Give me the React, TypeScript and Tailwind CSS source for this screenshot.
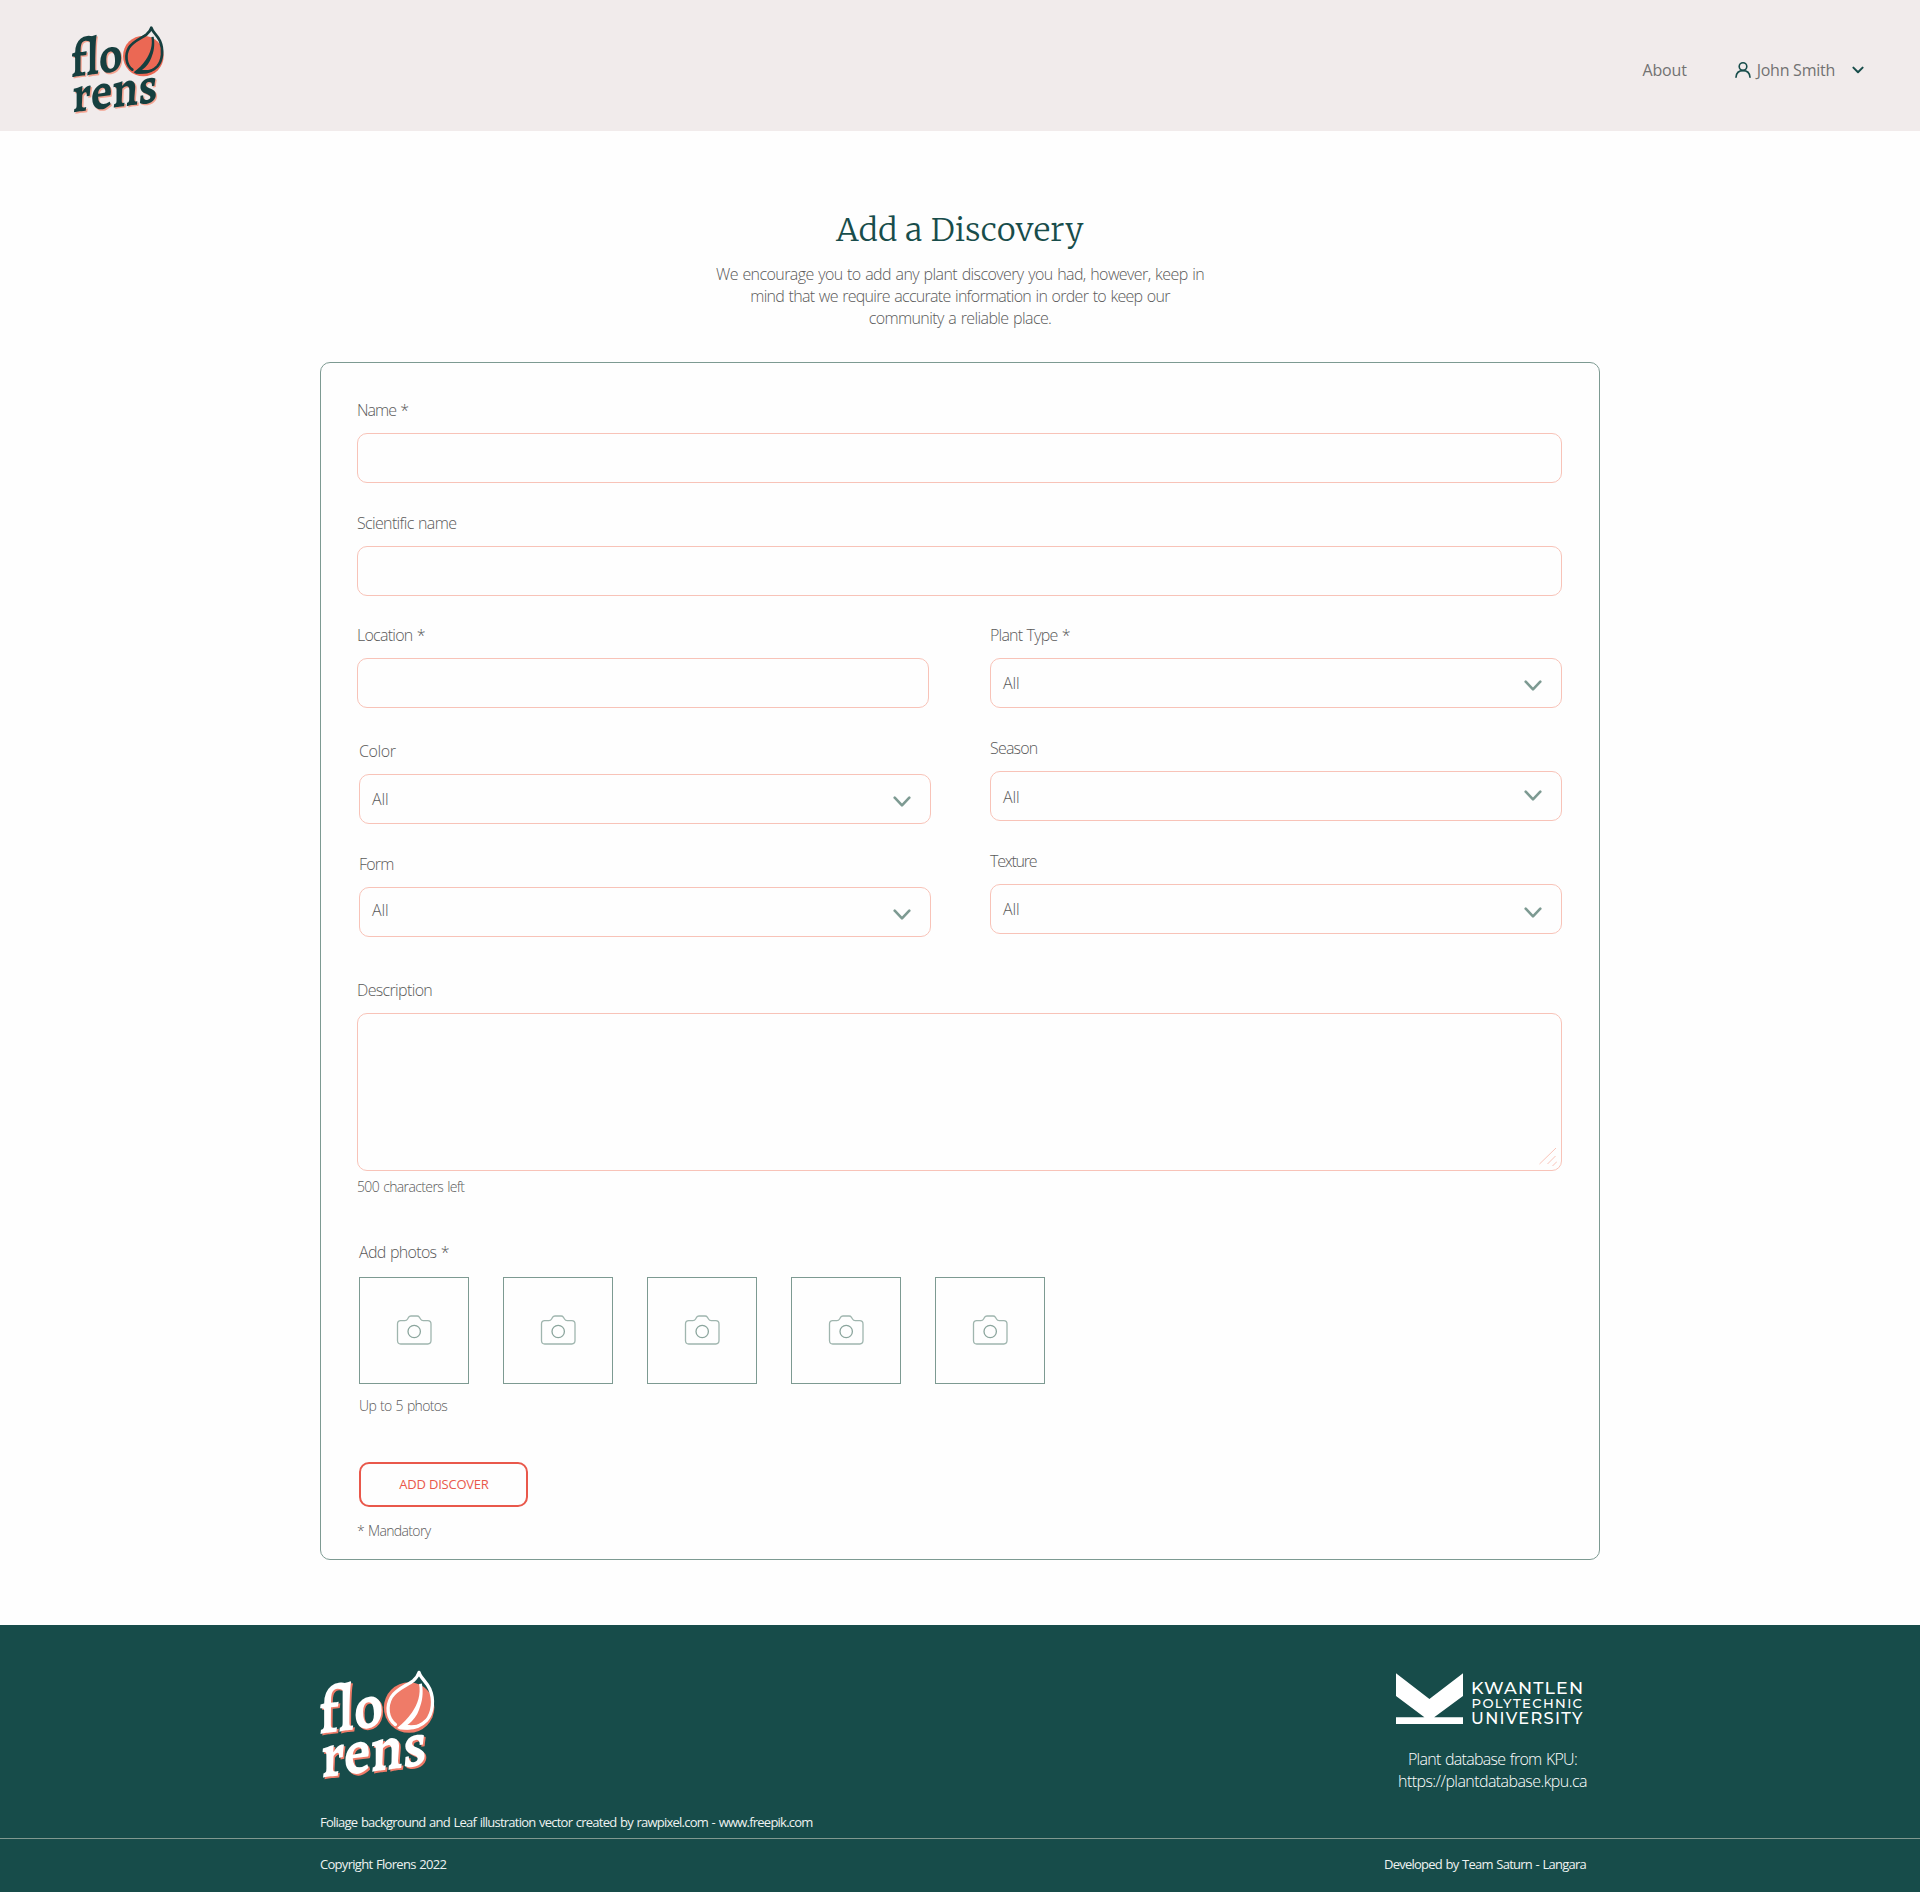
import type { ReactNode } from 'react';
import clsx from 'clsx';

const labelText = "text-base leading-[22px] font-light text-[#5a5a5a] [word-spacing:1px]";
const noteText = "text-sm leading-5 font-light text-[#5a5a5a] [word-spacing:1px]";

function FlorensLogo({ ink, shade, coral, className }: { ink: string; shade: string; coral: string; className: string }) {
  const words = (fill: string, dx: number, dy: number) => (
    <g fill={fill} fontFamily='"Alegreya", "Liberation Serif", serif' fontWeight="600" fontSize="158">
      <text transform={`translate(${62 + dx} ${201 + dy}) skewY(-7)`} textLength="156" lengthAdjust="spacingAndGlyphs">flo</text>
      <text transform={`translate(${67 + dx} ${307 + dy}) skewY(-7)`} textLength="255" lengthAdjust="spacingAndGlyphs">rens</text>
    </g>
  );
  return (
    <svg viewBox="60 45 285 270" className={clsx("overflow-visible", className)} role="img" aria-label="florens">
      <circle cx="280" cy="138" r="61" fill={coral} />
      {words(shade, 4, 4)}
      {words(ink, 0, 0)}
      <path
        d="M247 179C226 163 225 134 237 113C249 93 276 84 290 73C298 66 302 60 304 53C307 66 322 75 330 93C341 119 338 150 322 169C306 186 284 190 260 186"
        fill="none"
        stroke={ink}
        strokeWidth="8"
        strokeLinejoin="round"
        strokeLinecap="round"
      />
      <path d="M304 81C309 105 301 130 287 150C277 165 265 176 251 187L258 191C284 192 306 188 320 172C306 180 290 181 276 180C291 168 299 157 304 143C312 124 315 104 311 80Z" fill={ink} />
    </svg>
  );
}

function KpuLogo() {
  return (
    <svg viewBox="0 0 187 52" className="h-[52px] w-[187px] shrink-0 self-start overflow-visible" fill="#fff" role="img" aria-label="Kwantlen Polytechnic University">
      <path d="M0 0.3L33.4 26L67 0.3V23L38.2 44.3H67V51H0V44.3H28.4L0 23Z" />
      <g fontFamily='"Montserrat", "Open Sans", sans-serif' fontWeight="500">
        <text x="75" y="21" fontSize="17.4" textLength="112" lengthAdjust="spacing">KWANTLEN</text>
        <text x="75.5" y="34.8" fontSize="13.2" textLength="110.5" lengthAdjust="spacing">POLYTECHNIC</text>
        <text x="75" y="51" fontSize="16.2" textLength="111.5" lengthAdjust="spacing">UNIVERSITY</text>
      </g>
    </svg>
  );
}

function Field({ label, tracking, children }: { label: string; tracking: string; children?: ReactNode }) {
  return (
    <label className="flex flex-col gap-3">
      <span className={clsx(labelText, tracking)}>{label}</span>
      <span className="flex h-[50px] items-start justify-between rounded-[10px] border border-[#f8c3b8] bg-[#fefefe] pl-3 pr-[19px]">
        {children}
      </span>
    </label>
  );
}

function Choice({ text, chevron }: { text: string; chevron: string }) {
  return (
    <>
      <span className={clsx(labelText, "tracking-[-0.1px]", text)}>All</span>
      <svg viewBox="0 0 18 11" className={clsx("h-[11px] w-[18px]", chevron)} fill="none" stroke="#7d9a92" strokeWidth="2.6" strokeLinecap="round" strokeLinejoin="round">
        <path d="M1.7 1.7L9 9.4L16.3 1.7" />
      </svg>
    </>
  );
}

function PhotoSlot() {
  return (
    <div className="flex h-[107px] w-[110px] items-center justify-center border border-[#7d9a92]">
      <svg viewBox="0 0 36 30" className="mb-0.5 h-[30px] w-[36px]" fill="none" stroke="#9fb5ae" strokeWidth="1.3">
        <path d="M1.5 9Q1.5 5.6 4.7 5.6H8.9Q10.7 5.6 11.6 4L12.7 2.2Q13.4 1 14.9 1H21.1Q22.5 1 23.3 2.2L24.5 4Q25.4 5.6 27.2 5.6H31.8Q35 5.6 35 9V25.6Q35 29 31.8 29H4.7Q1.5 29 1.5 25.6Z" />
        <circle cx="18.2" cy="16.5" r="6.2" stroke="#8ba59d" />
      </svg>
    </div>
  );
}

export default function App() {
  return (
    <div className="flex min-h-[1892px] w-full flex-col bg-[#fefefe] font-['Open_Sans','Noto_Sans',sans-serif]">
      <header className="flex h-[131px] items-start justify-between bg-[#f1ebeb] pl-[70px] pr-[56px]">
        <FlorensLogo ink="#163f3f" shade="#f4a492" coral="#eb6854" className="mt-[25px] h-[90px] w-[95px]" />
        <nav className="mt-[59px] flex items-center leading-[22px] text-[#727272]">
          <a className="tracking-[-0.2px]">About</a>
          <svg viewBox="0 0 16 16" className="ml-[48px] h-[16px] w-[16px]" fill="none" stroke="#184d4b" strokeWidth="1.6" strokeLinecap="round">
            <circle cx="8" cy="4.6" r="3.8" />
            <path d="M1 15.2C1.3 11.2 4 8.6 8 8.6S14.7 11.2 15 15.2" />
          </svg>
          <span className="ml-[6px] tracking-[-0.25px]">John Smith</span>
          <svg viewBox="0 0 12 8" className="ml-[17px] h-[8px] w-[12px]" fill="none" stroke="#184d4b" strokeWidth="2" strokeLinecap="round" strokeLinejoin="round">
            <path d="M1.4 1.6L6 6.2L10.6 1.6" />
          </svg>
        </nav>
      </header>

      <main className="mx-auto w-[1280px]">
        <h1 className="mt-[79px] text-center font-['Merriweather','DejaVu_Serif_Condensed',serif] text-[32px] leading-[40px] font-light tracking-[0.4px] text-[#184d4b]">
          Add a Discovery
        </h1>
        <p className="mt-[13px] text-center text-base leading-[22px] font-light text-[#5a5a5a] [word-spacing:1px]">
          <span className="block tracking-[-0.59px]">We encourage you to add any plant discovery you had, however, keep in</span>
          <span className="block tracking-[-0.71px]">mind that we require accurate information in order to keep our</span>
          <span className="block tracking-[-0.6px]">community a reliable place.</span>
        </p>

        <form className="mt-[33px] h-[1198px] rounded-[10px] border border-[#7d9a92] bg-[#fefefe] pt-9 pr-[37px] pl-9">
          <div className="flex flex-col gap-[29px]">
            <Field label="Name *" tracking="tracking-[-0.95px]" />
            <Field label="Scientific name" tracking="tracking-[-0.66px]" />
          </div>

          <div className="mt-7 flex h-[313px] justify-between">
            <div className="w-[574px]">
              <div className="w-[572px]">
                <Field label="Location *" tracking="tracking-[-0.75px]" />
              </div>
              <div className="mt-8 ml-0.5 flex flex-col gap-[29px]">
                <Field label="Color" tracking="tracking-[-0.4px]">
                  <Choice text="mt-[13px]" chevron="mt-[21px]" />
                </Field>
                <Field label="Form" tracking="tracking-[-0.8px]">
                  <Choice text="mt-[11px]" chevron="mt-[21px]" />
                </Field>
              </div>
            </div>
            <div className="flex w-[572px] flex-col gap-[29px]">
              <Field label="Plant Type *" tracking="tracking-[-0.8px]">
                <Choice text="mt-[13px]" chevron="mt-[21px]" />
              </Field>
              <Field label="Season" tracking="tracking-[-0.8px]">
                <Choice text="mt-[14px]" chevron="mt-[18px]" />
              </Field>
              <Field label="Texture" tracking="tracking-[-1.25px]">
                <Choice text="mt-[13px]" chevron="mt-[22px]" />
              </Field>
            </div>
          </div>

          <div className="mt-[42px] flex flex-col">
            <span className={clsx(labelText, "tracking-[-0.65px]")}>Description</span>
            <div className="mt-3 flex h-[158px] items-end justify-end rounded-[10px] border border-[#f8c3b8] pr-[4px] pb-[4px]">
              <svg viewBox="0 0 18 18" className="h-[18px] w-[18px]" fill="none" stroke="#f8c3b8" strokeWidth="1">
                <path d="M0.5 16L17.5 -0.5M8.5 16L16.5 8M13.5 18L18 13.5" />
              </svg>
            </div>
            <span className={clsx(noteText, "mt-1.5 tracking-[-0.62px]")}>500 characters left</span>
          </div>

          <div className="mt-11 ml-0.5 flex flex-col items-start">
            <span className={clsx(labelText, "tracking-[-0.7px]")}>Add photos *</span>
            <div className="mt-3.5 flex gap-[34px]">
              {[1, 2, 3, 4, 5].map((slot) => (
                <PhotoSlot key={slot} />
              ))}
            </div>
            <span className={clsx(noteText, "mt-3 tracking-[-0.66px]")}>Up to 5 photos</span>
            <button type="button" className="mt-[46px] h-[45px] w-[169px] rounded-[10px] border-2 border-[#e9584b] pl-px text-[13px] tracking-[-0.22px] text-[#e9584b]">
              ADD DISCOVER
            </button>
          </div>
          <p className={clsx(noteText, "mt-3.5 tracking-[-0.65px]")}>* Mandatory</p>
        </form>
      </main>

      <footer className="mt-[65px] flex grow flex-col bg-[#174c4a] text-[13px] leading-[18px] text-[#eef2f1] [word-spacing:1px]">
        <div className="mx-auto flex h-[213px] w-[1280px] items-start justify-between">
          <div className="flex flex-col">
            <FlorensLogo ink="#ffffff" shade="#ef7b68" coral="#ef7b68" className="mt-[44px] ml-[-2px] h-[112px] w-[118px]" />
            <span className="mt-8 tracking-[-0.77px]">
              Foliage background and Leaf illustration vector created by rawpixel.com - www.freepik.com
            </span>
          </div>
          <div className="mr-[11px] flex w-[193px] flex-col items-center pt-12 text-base leading-[22px] font-light whitespace-nowrap text-white">
            <KpuLogo />
            <span className="mt-[23px] tracking-[-0.72px]">Plant database from KPU:</span>
            <span className="tracking-[-0.57px]">https://plantdatabase.kpu.ca</span>
          </div>
        </div>
        <div className="h-px bg-[#80988f]" />
        <div className="mx-auto mt-4 flex w-[1280px] justify-between pr-3.5">
          <span className="tracking-[-0.71px]">Copyright Florens 2022</span>
          <span className="tracking-[-0.77px]">Developed by Team Saturn - Langara</span>
        </div>
      </footer>
    </div>
  );
}
